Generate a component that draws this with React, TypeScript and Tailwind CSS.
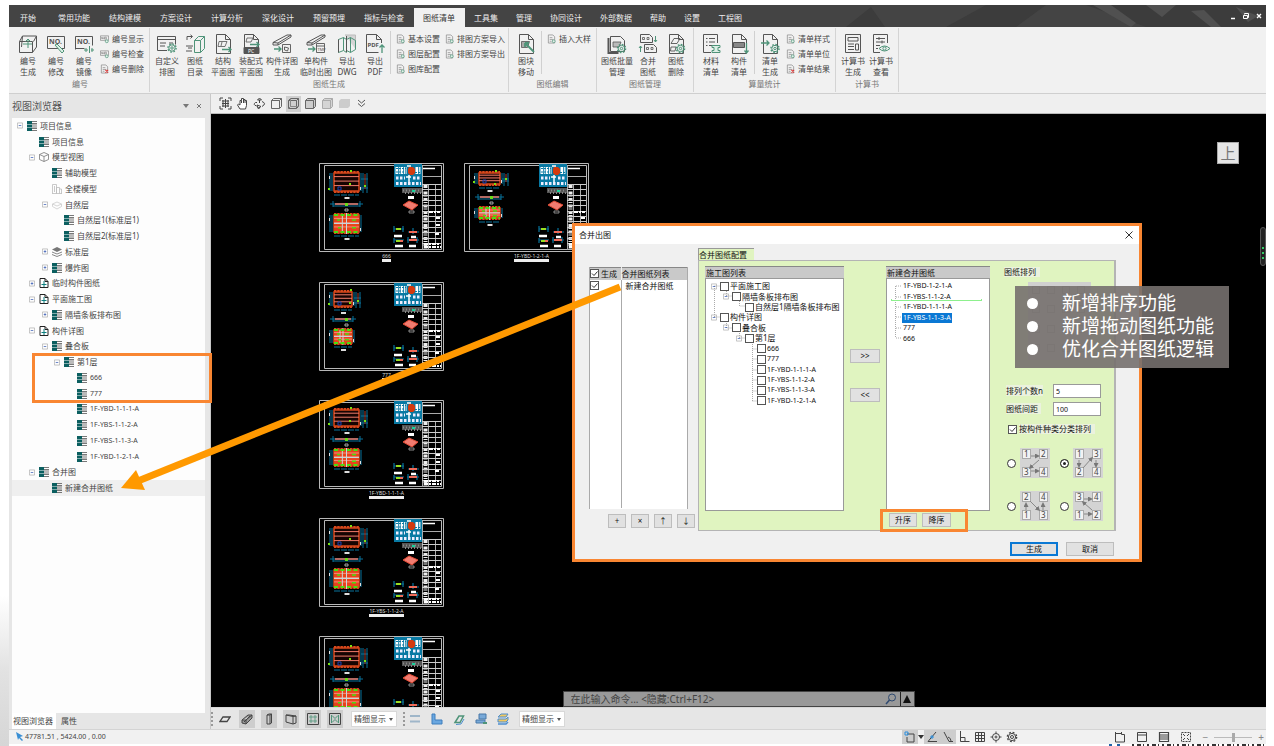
import type { ReactNode } from 'react';
import clsx from 'clsx';

const G = '#4f9479';
const D = '#555';

const TABS = ['开始', '常用功能', '结构建模', '方案设计', '计算分析', '深化设计', '预留预埋', '指标与检查', '图纸清单', '工具集', '管理', '协同设计', '外部数据', '帮助', '设置', '工程图'];

const PAGE = <path d="M3.500 .5h9l5 5v14h-14zM12.500 .5v5h5" />;

const gear = (x: number, y: number) => (
  <g stroke={G}>
    <circle cx={x} cy={y} r="3.200" />
    <circle cx={x} cy={y} r="1.200" />
    <circle cx={x} cy={y} r="4.100" strokeDasharray="1.600 1.600" strokeWidth="1.400" />
  </g>
);

const ICONS: Record<string, ReactNode> = {
  generate: <><path d="M1.500 7.500h13v11h-13zM1.500 7.500l3-5.500h14l-3 5.500M18.500 2v11l-4 5.500M4.500 2l-1 11" /><path d="M5 10h9M10 14V5M7.500 7.500L10 5l2.500 2.500" stroke={G} /></>,
  modify: <><path d="M1.500 2.500h17v12h-17z" /><text x="3" y="10" fontSize="7" fontWeight="bold" fill={D} stroke="none">NO.</text><path d="M9 11l2-1 7 7-2 2z" stroke={G} fill="#dcefe6" /></>,
  mirror: <><path d="M1.500 15.500v-13h17v9M1.500 14.500h9" /><text x="3" y="10" fontSize="7" fontWeight="bold" fill={D} stroke="none">NO.</text><path d="M15.500 12v7M10 16h4M17 16h3M12 14v4M18 14v4" stroke={G} /></>,
  custom: <><path d="M10 16.500H.5v-14h18v8M.5 5.500h18M3 9h6M3 12h5M12 9h4" />{gear(15, 14)}</>,
  catalog: <><path d="M9.500 6.500l4-4h6v12l-4 4h-6zM9.500 6.500h6v12M15.500 6.500l4-4" stroke={G} /><path d="M2 6V2.500h5M5.500 .8L7.500 2.500 5.500 4.500M1 12h7M3 14h4M1 17h6" /></>,
  plan: <>{PAGE}<path d="M6 7.500h8l-2 5H5zM9 8l-1 4" strokeWidth=".8" /><path d="M9 15.500h9M15.500 13l2.500 2.500-2.500 2.500" stroke={G} strokeWidth="1.300" /></>,
  prefab: <>{PAGE}<path d="M6 4h6l-2 4H5z" strokeWidth=".8" /><path d="M9 10.500h9M15.500 8l2.500 2.500L15.500 13" stroke={G} strokeWidth="1.300" /><path d="M3 13.500h15v6H3z" fill={D} /><text x="7" y="18.500" fontSize="5" fill="#fff" stroke="none">PC</text></>,
  detail: <><path d="M1 8.500L15 1h4L6 9zM1 8.500V11h5L19 3V1M6 9v2" /><path d="M2 15h7M6.500 12.500L9 15l-2.500 2.500" stroke={G} strokeWidth="1.300" /><path d="M10.500 10.500h8v8h-8zM12.500 13l4 1-1 3-3-1z" strokeWidth=".9" /></>,
  single: <><path d="M1 8.500L15 1h4L6 9zM1 8.500V11h5L19 3V1M6 9v2" /><path d="M2 15h7M6.500 12.500L9 15l-2.500 2.500" stroke={G} strokeWidth="1.300" /><path d="M10.500 9.500h8v9h-8zM10.500 12h8" strokeWidth=".9" /><text x="11.500" y="17" fontSize="4" fill={D} stroke="none">TMP</text></>,
  dwg: <><path d="M8 1h10.500v14" fill="#d5d5d5" stroke="#bbb" /><path d="M1.500 5.500l5-2v13l-5 2zM6.500 3.500l3 2v13l-3-2M9.500 5.500l4-2 5 3v9l-5 3-4-2M13.500 3.500v15" stroke={G} /><path d="M1.500 5.500v13M9.500 2v16" /></>,
  pdf: <><path d="M16.500 9V5.500l-5-5h-10v18h12M11.500 .5v5h5" /><text x="2.500" y="13" fontSize="6" fontWeight="bold" fill={D} stroke="none">PDF</text><path d="M17 19v-8M14.500 13.500L17 11l2.500 2.500" stroke={G} strokeWidth="1.300" /></>,
  block: <>{PAGE}<path d="M5.500 7.500h8l-2 6h-6z" fill="#aaa" strokeWidth=".8" /><path d="M9 9l9 9M9 9v4M9 9h4" stroke={G} strokeWidth="1.800" /></>,
  batch: <><path d="M3.500 2.500h10l4 4v11h-14z" /><path d="M1.500 4v15h10" strokeWidth="2" /><path d="M6 8h8l-2 5H6z" fill="#bbb" strokeWidth=".8" />{gear(14.500, 14.500)}</>,
  merge: <><path d="M2.500 .5h9l3 3v5h-12zM6.500 10.500h9l3 3v5h-12z" /><path d="M4.500 3.500h2v2h-2zM9 3.500h2v2H9zM8.500 13.500h2v2h-2zM13 13.500h2v2h-2z" strokeWidth=".8" /><path d="M17.500 2v6M16 6l1.500 2L19 6M2.500 18v-6M1 14l1.500-2L4 14" stroke={G} /></>,
  remove: <>{PAGE}<path d="M8 4.500h6l-3 5H5zM5 13h5l-1 4H4.500z" strokeWidth=".9" />{gear(14.500, 14.500)}</>,
  material: <><path d="M16.500 9V.5h-14v18H10M5 4.500h1.500M8 4.500h6M5 8h1.500M8 8h6M5 11.500h1.500M8 11.500h3" /><path d="M11 11.500h8v2h-2v3h2v2h-8v-2h2v-3h-2z" stroke={G} fill="#dcefe6" /></>,
  component: <>{PAGE}<path d="M4.500 8.500h11v5h-11z" fill="#888" /><path d="M17.500 9v10M15.500 16.500l2 2.500 2-2.500" stroke={G} strokeWidth="1.300" /></>,
  listgen: <>{PAGE}<path d="M1 9h8M6.500 6.500L9 9l-2.500 2.500" stroke={G} strokeWidth="1.300" />{gear(15, 14.500)}</>,
  calc: <path d="M2.500 .5h15v18h-15zM5 3.500h10v3.500H5zM5 10h6M5 12.500h6M5 15.500h6M12.500 10h3v6h-3z" />,
  view: <><path d="M16.500 9V.5h-14v18H9M5 4.500h9M8 3v3M5 8h9M11 6.500v3M5 11.500h4M5 14.500h2" /><path d="M8 14.500q5.500-5 11 0q-5.500 5-11 0z" stroke={G} /><circle cx="13.500" cy="14.500" r="1.600" stroke={G} /></>,
};

function Icon({ name }: { name: string }) {
  return <svg viewBox="0 0 20 20" className="h-5 w-5" fill="none" stroke={D}>{ICONS[name]}</svg>;
}

function SmallIcon({ kind }: { kind: string }) {
  return (
    <svg viewBox="0 0 10 10" className="h-[10px] w-[9px] shrink-0" fill="none" stroke="#888" strokeWidth=".8">
      {kind === 'no' ? <path d="M.5 1.500h9v5h-9zM2 5V3l1.500 2V3M5 3h2v2H5z" /> : <path d="M1.500 .5h5l2 2v7h-7zM3 3.500h3M3 5.500h4M3 7.500h2" />}
      {kind === 'x' ? <path d="M6 6l3 3M9 6L6 9" stroke="#d33" strokeWidth="1.200" /> : <circle cx="7.500" cy="7.500" r="1.600" stroke={G} fill="#e4f1ea" />}
    </svg>
  );
}

type Big = [string, string, string, boolean?];

function BigButton({ item }: { item: Big }) {
  const [icon, a, b, wide] = item;
  return (
    <button className={clsx('flex flex-col items-center pt-[6px] leading-[11px] whitespace-nowrap', wide ? 'w-[34px]' : 'w-7')}>
      <Icon name={icon} />
      <span className="mt-px">{a}</span>
      <span>{b}</span>
    </button>
  );
}

function SmallColumn({ items }: { items: [string, string][] }) {
  return (
    <div className="flex flex-col pt-[3px]">
      {items.map(([kind, text]) => (
        <button key={text} className="flex h-[15px] items-center gap-[3px] whitespace-nowrap"><SmallIcon kind={kind} />{text}</button>
      ))}
    </div>
  );
}

function Group({ title, children }: { title: string; children: ReactNode }) {
  return (
    <section className="my-px flex flex-col border-r border-[#d4d4d4] px-[3px]">
      <div className="flex h-[49px]">{children}</div>
      <h2 className="text-center leading-[14px] text-[#777]">{title}</h2>
    </section>
  );
}

const Sep = () => <div className="mx-px mt-[3px] mb-[3px] w-px bg-[#d0d0d0]" />;

function Ribbon() {
  return (
    <div className="flex h-[67px] border-b border-[#cfcfcf] bg-[#f1f1f1] pl-[2px] text-[8px] text-[#444]">
      <Group title="编号">
        <BigButton item={['generate', '编号', '生成']} />
        <BigButton item={['modify', '编号', '修改']} />
        <BigButton item={['mirror', '编号', '镜像']} />
        <div className="px-[2px]"><SmallColumn items={[['no', '编号显示'], ['no', '编号检查'], ['x', '编号删除']]} /></div>
      </Group>
      <Group title="图纸生成">
        <BigButton item={['custom', '自定义', '排图']} />
        <BigButton item={['catalog', '图纸', '目录']} />
        <BigButton item={['plan', '结构', '平面图']} />
        <BigButton item={['prefab', '装配式', '平面图']} />
        <BigButton item={['detail', '构件详图', '生成', true]} />
        <BigButton item={['single', '单构件', '临时出图', true]} />
        <BigButton item={['dwg', '导出', 'DWG']} />
        <BigButton item={['pdf', '导出', 'PDF']} />
        <Sep />
        <div className="flex gap-[5px] pl-1">
          <SmallColumn items={[['doc', '基本设置'], ['doc', '图层配置'], ['doc', '图库配置']]} />
          <SmallColumn items={[['doc', '排图方案导入'], ['doc', '排图方案导出']]} />
        </div>
      </Group>
      <Group title="图纸编辑">
        <BigButton item={['block', '图块', '移动']} />
        <Sep />
        <div className="pr-[2px] pl-1"><SmallColumn items={[['doc', '插入大样']]} /></div>
      </Group>
      <Group title="图纸管理">
        <BigButton item={['batch', '图纸批量', '管理', true]} />
        <BigButton item={['merge', '合并', '图纸']} />
        <BigButton item={['remove', '图纸', '删除']} />
      </Group>
      <Group title="算量统计">
        <BigButton item={['material', '材料', '清单']} />
        <BigButton item={['component', '构件', '清单']} />
        <Sep />
        <BigButton item={['listgen', '清单', '生成']} />
        <div className="px-[2px]"><SmallColumn items={[['doc', '清单样式'], ['doc', '清单单位'], ['x', '清单结果']]} /></div>
      </Group>
      <Group title="计算书">
        <BigButton item={['calc', '计算书', '生成']} />
        <BigButton item={['view', '计算书', '查看']} />
      </Group>
    </div>
  );
}

function TitleBar() {
  return (
    <header className="relative flex h-[22px] items-end bg-[#444] pl-[2px] text-[8px] text-[#eee]">
      <svg className="absolute inset-y-0 right-0 h-full w-[420px]" viewBox="0 0 420 22" preserveAspectRatio="none">
        <path d="M0 22L25 2l14 20zM100 22L140 0h60l-30 22zM240 0h180v22H300z" fill="#3c3c3c" />
        <path d="M265 0l25 18-5 4-38-22zM300 0h30l-14 12zM345 6l20 16h10L358 5zM390 2l12 15 10-6z" fill="#505050" />
      </svg>
      <nav className="relative flex h-[19px]">
        {TABS.map((t, i) => (
          <button key={t} className={clsx('pl-[9px] leading-[18px] whitespace-nowrap', i === 0 ? 'pr-[13px]' : i > 8 ? 'pr-[9px]' : 'pr-[10px]', t === '图纸清单' && 'bg-[#f1f1f1] text-[#333]')}>{t}</button>
        ))}
      </nav>
      <div className="relative ml-auto flex h-full items-center gap-[6px] pr-1">
        <button aria-label="minimize"><svg width="6" height="8" stroke="#fff"><path d="M1 6.500h4" strokeWidth="1.500" /></svg></button>
        <button aria-label="restore"><svg width="8" height="8" fill="none" stroke="#fff"><path d="M2.500 2.500v-1h4v4h-1M1.500 3.500h4v3h-4z" /></svg></button>
        <button aria-label="close"><svg width="6" height="8" stroke="#fff" strokeWidth="1.400"><path d="M1 2l4 4M5 2L1 6" /></svg></button>
      </div>
    </header>
  );
}

// [level, icon, label, expander]
const TREE: [number, string, string, string?][] = [
  [0, 'list', '项目信息', '-'],
  [1, 'list', '项目信息'],
  [1, 'cube', '模型视图', '-'],
  [2, 'list', '辅助模型'],
  [2, 'building', '全楼模型'],
  [2, 'ghost', '自然层', '-'],
  [3, 'list', '自然层1(标准层1)'],
  [3, 'list', '自然层2(标准层1)'],
  [2, 'layers', '标准层', '+'],
  [2, 'list', '爆炸图', '+'],
  [1, 'page', '临时构件图纸', '+'],
  [1, 'page', '平面施工图', '-'],
  [2, 'list', '隔墙条板排布图', '+'],
  [1, 'page', '构件详图', '-'],
  [2, 'list', '叠合板', '-'],
  [3, 'list', '第1层', '-'],
  [4, 'list', '666'],
  [4, 'list', '777'],
  [4, 'list', '1F-YBD-1-1-1-A'],
  [4, 'list', '1F-YBS-1-1-2-A'],
  [4, 'list', '1F-YBS-1-1-3-A'],
  [4, 'list', '1F-YBD-1-2-1-A'],
  [1, 'list', '合并图', '-'],
  [2, 'list', '新建合并图纸'],
];

const INDENT = ['pl-[5px]', 'pl-[17px]', 'pl-[30px]', 'pl-[42px]', 'pl-[55px]'];

const TREE_ICONS: Record<string, ReactNode> = {
  list: <><path d="M0 0h5v3H0zM0 3.500h5v3H0zM0 7h5v3H0z" fill="#0b5f60" /><path d="M5 .5h5M5 2.500h5M5 4h5M5 6h5M5 7.500h5M5 9.500h5" stroke="#555" strokeWidth=".8" /></>,
  cube: <path d="M5 .5l4.500 2v5L5 9.500.5 7.500v-5zM.5 2.500L5 4.500l4.500-2M5 4.500v5" fill="none" stroke="#777" strokeWidth=".8" />,
  building: <path d="M.5 9.500v-9h4v9M4.500 9.500v-6h3v6M7.500 5h2v4.500M0 9.500h10M2.500 2v6" fill="none" stroke="#bbb" strokeWidth=".8" />,
  ghost: <path d="M.5 4L5 2l4.500 2v2.500L5 9 .5 6.500zM.5 4L5 6l4.500-2" fill="none" stroke="#ccc" strokeWidth=".8" />,
  layers: <><path d="M5 0l5 2.500L5 5 0 2.500z" fill="#777" /><path d="M0 5l5 2 5-2M0 7.500l5 2 5-2" fill="none" stroke="#888" /></>,
  page: <><path d="M1 .5h5l3 3v6H1zM6 .5v3h3" fill="#fff" stroke="#222" /><path d="M5 3v6M2.500 6.500h5" stroke="#0b7f80" /></>,
};

function Expander({ sign }: { sign?: string }) {
  return (
    <svg viewBox="0 0 7 7" className={clsx('h-[7px] w-[6px] shrink-0', !sign && 'invisible')} fill="none" strokeWidth=".8">
      <path d="M.5 .5h6v6h-6z" stroke="#aaa" />
      <path d={sign === '+' ? 'M2 3.500h3M3.500 2v3' : 'M2 3.500h3'} stroke="#2a50b0" />
    </svg>
  );
}

function Browser() {
  return (
    <aside className="flex w-[202px] shrink-0 flex-col border-r border-[#c8c8c8] bg-[#e6e6e6] pl-[3px]">
      <div className="flex h-6 items-center text-[#555]">
        <h1 className="grow text-[10px]">视图浏览器</h1>
        <button aria-label="menu" className="mr-[7px]"><svg width="6" height="4"><path d="M0 0h6L3 4z" fill="#777" /></svg></button>
        <button aria-label="close" className="mr-2"><svg width="6" height="6" stroke="#777"><path d="M1 1l4 4M5 1L1 5" /></svg></button>
      </div>
      <div className="mr-[5px] grow bg-[#fdfdfd]">
        <ul className="flex h-[378px] flex-col text-[8px] text-[#444]">
          {TREE.map(([lv, icon, text, sign], i) => (
            <li key={i} className={clsx('flex flex-1 items-center', INDENT[lv], i === 23 && 'bg-[#efefef]')}>
              <Expander sign={sign} />
              <svg viewBox="0 0 10 10" className="mr-[3px] ml-1 h-[10px] w-[10px] shrink-0">{TREE_ICONS[icon]}</svg>
              <span className={clsx('leading-3', lv === 4 && 'text-[7px]')}>{text}</span>
            </li>
          ))}
        </ul>
      </div>
      <div className="flex h-4 text-[8px] leading-[14px] text-[#444]">
        <button className="bg-white pr-[3px] pl-px">视图浏览器</button>
        <button className="px-[5px]">属性</button>
      </div>
    </aside>
  );
}

function Box3({ d = 'none', stroke = '#666' }: { d?: string; stroke?: string }) {
  return <path d="M1.500 3.500l2-2h8v8l-2 2h-8zM1.500 3.500h8v8M9.500 3.500l2-2" fill={d} stroke={stroke} />;
}

function ViewBar() {
  const items: [string, ReactNode][] = [
    ['fit', <><path d="M1 4V1h3M9 1h3v3M12 9v3H9M4 12H1V9" fill="none" stroke="#444" /><path d="M3 4h7M3 6.500h7M3 9h7M4 3v7M6.500 2v9M9 3v7" stroke="#444" /></>],
    ['pan', <path d="M4 12L1.500 8l1-1L4 8V3.500h1.500V1.500h2v1h1.500v1h1.500v5L9.500 12zM5.500 3.500V6M7.500 2v4M9 3v3" fill="#fff" stroke="#444" />],
    ['orbit', <path d="M6.500 1l2 2h-4zM4 5.500h-1.500q-3 2 1 3.500M9 4.500q5 2 0 5M6.500 3v3M4 8l4 1.500-3 2zM6 10v2" fill="none" stroke="#444" />],
    ['wire', <Box3 />],
    ['hidden', <><Box3 /><path d="M3.500 1.500v8h8M3.500 9.500l-2 2" fill="none" stroke="#888" /></>],
    ['shade', <Box3 d="#ccc" />],
    ['solid', <Box3 d="#d4d4d4" stroke="#aaa" />],
    ['flat', <path d="M1 4l2-2h9v7l-2 2H1z" fill="#ccc" />],
    ['more', <path d="M3 3l3.500 3L10 3M3 6.500l3.500 3 3.500-3" fill="none" stroke="#555" />],
  ];
  return (
    <div className="flex h-5 items-center gap-[2px] border-b border-[#bbb] bg-[#efefef] pl-[7px]">
      {items.map(([name, art]) => (
        <button key={name} aria-label={name} className={clsx('flex h-4 w-[15px] items-center justify-center', name === 'hidden' && 'bg-[#cfcfcf]')}>
          <svg viewBox="0 0 13 13" className="h-[13px] w-[13px]">{art}</svg>
        </button>
      ))}
    </div>
  );
}

function Slab({ x, y, w, h, green }: { x: number; y: number; w: number; h: number; green?: boolean }) {
  return (
    <g>
      <path d={`M${x} ${y - 1}h${w}M${x} ${y + h + 1}h${w}`} stroke="#d8481c" strokeWidth="2" strokeDasharray="2.500 .7" />
      <rect x={x} y={y} width={w} height={h} fill={green ? '#e8441c' : '#160402'} stroke="#d8481c" strokeWidth="1.500" />
      {[0.200, 0.450, 0.700].map((k) => (
        <path key={k} d={`M${x} ${y + h * k}h${w}`} stroke={green ? '#f58a78' : '#f07c6c'} />
      ))}
      {green ? (
        <>
          <path d={`M${x + w / 2} ${y - 2}v${h + 4}M${x + w / 3} ${y}v${h}M${x} ${y + h / 2}h${w}`} stroke="#c9d4d8" />
          <path d={`M${x} ${y}h${w}M${x} ${y + h}h${w}`} stroke="#47e010" strokeWidth="2" strokeDasharray="4 2.500" />
          <path d={`M${x + 3} ${y + h * 0.300}h3M${x + w - 7} ${y + h * 0.300}h4M${x + 4} ${y + h * 0.750}h3M${x + w - 7} ${y + h * 0.750}h4`} stroke="#47e010" strokeWidth="1.500" />
        </>
      ) : (
        <path d={`M${x + 4} ${y + h - 4}h3v3h-3z`} fill="none" stroke="#1744b8" />
      )}
      <path d={`M${x - 4} ${y}v${h}M${x - 2} ${y}v${h}M${x + w + 2} ${y}v${h}`} stroke="#08739b" />
      <path d={`M${x} ${y + h + 4}h${w}`} stroke="#08739b" strokeDasharray="6 1" />
      <path d={`M${x - 5} ${y + 3}h1v3h-1zM${x + w + 1} ${y + h - 4}h1v3h-1zM${x + w / 2 - 2} ${y + h + 6}h5v2h-5z`} fill="#ddd" />
    </g>
  );
}

function Sheet({ w, h, top }: { w: number; h: number; top: number }) {
  const mid = top + h + 13;
  return (
    <svg viewBox="0 0 125 90" className="block h-[90px] w-[125px]">
      <path d="M.5 .5h124v88H.5zM5.500 2.500h117v84h-117z" fill="none" stroke="#b8b8b8" />
      <path d="M103.500 3v84M109.500 21v66M116.500 21v60M103 13.500h19" stroke="#aaa" fill="none" />
      <path d="M106.500 22v64" stroke="#eee" strokeWidth="4" strokeDasharray="3 1 1 1.500" />
      {[21, 26, 32, 37, 42, 48, 53, 58, 64, 69, 75, 80].map((y) => <path key={y} d={`M103 ${y + 0.500}h19`} stroke="#ccc" />)}
      <path d="M117 55h4M117 62h5M110 49h11M116 71h5M105 81h16M105 84h17" stroke="#fff" strokeWidth="2" strokeDasharray="4 1 2 1" />
      <path d="M104 5.500h12" stroke="#fff" strokeWidth="1.500" />
      <rect x="75" y="1" width="28" height="23" fill="#0879a3" />
      <path d="M76.500 7.500h11M96.500 7.500h5.500" stroke="#fff" strokeWidth="7" strokeDasharray="2.500 .8 1 .8" />
      <path d="M77 5.500h10M96 9.500h6M77 9h8" stroke="#0879a3" strokeDasharray="2 1" />
      <path d="M77 15h9M94 15h8M77 20.500h25" stroke="#eef" strokeWidth="3" strokeDasharray="2.500 1.500" />
      <path d="M88 3h4M90 12v7M87 14h5" stroke="#fff" strokeWidth="1.500" />
      <path d="M90 4h4l2 2v4l-2 2h-3l-2-2V6z" fill="#d33a0e" />
      <rect x="83" y="25" width="20" height="5" fill="#555" />
      <path d="M84 27.500h18M86 30h16" stroke="#888" strokeWidth="2" strokeDasharray="1 2" />
      <path d="M93 27h3v2h-3z" fill="#18d29a" />
      <path d="M89 33h6v3h-6z" fill="#fff" />
      <path d="M84 42l6-4 9 4-6 5z" fill="#f27c70" stroke="#e04a34" />
      <path d="M90 48h5v2h-5z" fill="none" stroke="#aaa" strokeWidth=".8" />
      <Slab x={15} y={top} w={w} h={h} />
      <path d={`M${w + 19} ${top}v${h + 2}M${w + 23} ${top}v${h + 2}M${w + 17} ${top + 6}h7M${w + 17} ${top + h - 3}h7`} stroke="#08739b" fill="none" />
      <path d={`M${w + 21} ${top + 1}v${h - 3}`} stroke="#b03a26" />
      <path d={`M31 ${top - 3}h2v2h-2zM30 ${top + 10}h2v2h-2zM9 ${top + h - 3}h2v2H9zM${w + 20} ${top + h - 6}h2v2h-2z`} fill="#7be010" />
      <path d={`M11 ${mid}h${w + 8}M14 ${mid - 3}v6M${w + 16} ${mid - 3}v6M14 ${mid + 2}h${w + 2}`} stroke="#08739b" />
      <path d={`M16 ${mid}h${w - 2}`} stroke="#ef7b6b" strokeWidth="1.500" />
      <path d={`M26 ${mid - 1}h3v3h-3z`} fill="#6adb18" />
      <path d={`M26 ${mid + 5}h3v2h-3z`} fill="none" stroke="#ccc" strokeWidth=".8" />
      <Slab x={15} y={mid + 11} w={w} h={h - 1} green />
      <g strokeWidth="1.200" fill="none">
        <path d="M75 63v6M84 63v6M75 66h10M89 69h11M94 65v6M75 75v5M75 77h10M88 77h12M89 74v6M98 74v6" stroke="#08739b" />
        <path d="M77 66h5M77 78h4" stroke="#9adf20" strokeWidth="2" />
        <path d="M90 69h8M81 78h3M90 77h8" stroke="#f06a58" strokeWidth="2" />
        <path d="M75 73h8M76 83h8M90 83h7M92 74h5" stroke="#fff" strokeWidth="2.500" />
      </g>
    </svg>
  );
}

const SHEETS = [
  { label: '666', pos: 'left-[108px] top-[49px]', w: 25, h: 18, top: 10 },
  { label: '1F-YBD-1-2-1-A', pos: 'left-[253px] top-[49px]', w: 21, h: 11, top: 10 },
  { label: '777', pos: 'left-[108px] top-[168px]', w: 18, h: 14, top: 10 },
  { label: '1F-YBD-1-1-1-A', pos: 'left-[108px] top-[286px]', w: 25, h: 16, top: 10 },
  { label: '1F-YBS-1-1-2-A', pos: 'left-[108px] top-[404px]', w: 25, h: 18, top: 10 },
  { label: '1F-YBS-1-1-3-A', pos: 'left-[108px] top-[522px]', w: 25, h: 18, top: 12 },
];

function Drawing() {
  return (
    <main className="relative flex grow items-end justify-center overflow-hidden bg-black">
      {SHEETS.map((s) => (
        <figure key={s.label} className={clsx('absolute flex flex-col items-center', s.pos)}>
          <Sheet w={s.w} h={s.h} top={s.top} />
          <figcaption className="ml-[10px] border-b-3 border-[#eee] text-[5px] leading-[6px] text-[#ddd]">{s.label}</figcaption>
        </figure>
      ))}
      <button className="absolute top-7 right-[27px] h-[22px] w-[22px] border border-[#aaa] bg-[#e6e6e6] text-[15px] leading-[20px] text-[#777]">上</button>
      <div className="absolute top-[113px] right-0 h-[39px] w-[6px] rounded-sm border border-[#555] bg-[#222]">
        <div className="mx-px mt-[19px] h-[2px] bg-[#3c6] shadow-[0_5px_#3c6,0_10px_#3c6]" />
      </div>
      <div className="relative flex h-4 w-[352px] border border-[#444] bg-[#999]">
        <input aria-label="command" placeholder="在此输入命令... <隐藏:Ctrl+F12>" className="w-full min-w-0 grow pl-[7px] text-[10px] leading-3 outline-none placeholder:text-[#444]" />
        <svg className="mr-[3px] h-[14px] w-3 shrink-0" viewBox="0 0 12 14" fill="none" stroke="#2f4a70"><circle cx="7" cy="5.500" r="3.500" /><path d="M4.500 8L1 12" strokeWidth="1.500" /></svg>
        <button aria-label="expand" className="flex w-[14px] shrink-0 items-center justify-center border-l border-[#222]"><svg width="8" height="8"><path d="M4 0l4 8H0z" fill="#111" /></svg></button>
      </div>
    </main>
  );
}

function LevelSelect() {
  return (
    <div className="relative ml-2 flex h-4 w-[46px]">
      <select aria-label="detail" className="block h-4 w-full appearance-none border border-[#d8d8d8] bg-white pl-[2px] text-[8px] leading-3 text-[#444]"><option>精细显示</option></select>
      <svg className="pointer-events-none absolute top-[7px] right-1" width="4" height="3"><path d="M0 0h4L2 3z" fill="#555" /></svg>
    </div>
  );
}

function Tool({ name, on, children }: { name: string; on?: boolean; children: ReactNode }) {
  return (
    <button aria-label={name} className={clsx('flex h-[18px] w-4 items-center justify-center', on && 'bg-[#cdcdcd]')}>
      <svg viewBox="0 0 12 12" className="h-3 w-3" fill="none" stroke="#444">{children}</svg>
    </button>
  );
}

const Grip = () => <div className="h-[14px] border-l-2 border-dotted border-[#999]" />;

function DisplayBar() {
  return (
    <div className="flex h-[22px] items-center border-t border-[#d8d8d8] bg-[#e6e6e6]">
      <Grip />
      <div className="flex gap-[6px] pl-1">
        <Tool name="slab"><path d="M4 4h7L8 8.500H1z" strokeWidth="1.300" /></Tool>
        <Tool name="beam" on><path d="M1 7l6-5 4 0v3L5 11l-4-1zM1 7l4 0 6-5M5 7v4M3 9l6-6" fill="#999" /></Tool>
        <Tool name="column" on><path d="M4 2l2-1h2.500v9L7 11H4zM4 2h3v9M7 2l1.500-1" /></Tool>
        <Tool name="wall" on><path d="M1 2h3l7 1v7l-3 1-7-2zM1 2l7 1.500v7.500M8 3.500l3-.5" /></Tool>
        <Tool name="grid" on><path d="M.5 .5h11v11H.5z" /><path d="M3 3h2v2H3zM7 3h2v2H7zM3 7h2v2H3zM7 7h2v2H7z" stroke={G} strokeWidth=".8" /></Tool>
        <Tool name="stair" on><path d="M.5 .5h11v11H.5z" /><path d="M3 2.500l3 3 3-3M3 9.500l3-3 3 3M2.500 2v8M9.500 2v8" stroke={G} /></Tool>
      </div>
      <LevelSelect />
      <div className="ml-[6px]"><Grip /></div>
      <div className="flex gap-[6px] pl-[2px]">
        <Tool name="measure"><path d="M1 3h10M1 8.500h10" stroke="#9fb6c9" strokeWidth="2" /></Tool>
        <Tool name="corner"><path d="M1 1h3v6h7v4H1z" fill="#6aa7e0" stroke="#3f7fbd" /></Tool>
        <Tool name="attach"><path d="M2 9.500L6 3h4.500L7 9.500z" stroke={G} strokeWidth="1.500" /><path d="M3 11.500l5-.5 3-5" stroke="#4d8ed0" /></Tool>
        <Tool name="machine"><path d="M4 1h7v5H4zM1 7h9v3H1z" fill="#78a9d8" stroke="#4878a8" /><path d="M8 10h4" stroke={G} strokeWidth="2" /></Tool>
        <Tool name="stack"><path d="M4 1h7L9 4H1zM1 6h8l2-2v3L9 9H1z" fill="#f0c860" stroke="#4d8ed0" /><path d="M1 11h8l2-2" stroke="#4d8ed0" strokeWidth="1.500" /></Tool>
      </div>
      <LevelSelect />
    </div>
  );
}

function StatusBar() {
  return (
    <footer className="flex h-[15px] items-center border-t border-[#d4d4d4] bg-[#f1f1f1] text-[7px] text-[#444]">
      <svg className="ml-[7px]" width="8" height="10"><path d="M0 0l7 4-3 1 3 3-1 1-3-3-1 2z" fill="#3a8fd4" /></svg>
      <span className="ml-px">47781.51 , 5424.00 , 0.00</span>
      <div className="ml-auto flex h-full items-center overflow-hidden">
        <Tool name="snap" on><path d="M3 3h7v8H3V6" /><path d="M1 1h3v3H1z" stroke="#2b8fe0" /></Tool>
        <svg width="6" height="4"><path d="M0 0h6L3 4z" fill="#333" /></svg>
        <Tool name="polar" on><path d="M10 1L2 10.500h9" /><path d="M5 5h2v2H5z" stroke="#2b8fe0" /></Tool>
        <Tool name="angle" on><path d="M2 1l5 9.500h4M6 6q3 1 3 4" /></Tool>
        <Tool name="ortho"><path d="M2.500 0v10.500h9M3 6.500h4v4" /></Tool>
        <Tool name="mesh"><path d="M1.500 1.500h9v9h-9zM4.500 1.500v9M7.500 1.500v9M1.500 4.500h9M1.500 7.500h9" /></Tool>
        <Tool name="center"><circle cx="6" cy="6" r="3.500" /><circle cx="6" cy="6" r="1" /><path d="M6 .5v2M6 9.500v2M.5 6h2M9.500 6h2" /></Tool>
        <Tool name="options"><circle cx="6" cy="6" r="1.500" /><circle cx="6" cy="6" r="3.600" /><circle cx="6" cy="6" r="4.700" strokeDasharray="1.900 1.800" strokeWidth="1.300" /></Tool>
      </div>
      <div className="ml-[92px] flex items-center gap-[6px]">
        <Tool name="new"><path d="M1.500 2.500h6M1.500 1v10h9V3.500h-3V1" /></Tool>
        <Tool name="window"><path d="M1.500 1.500h9v9h-9zM1.500 4h9" /></Tool>
        <Tool name="rows"><path d="M1.500 1.500h9v9h-9zM2 4h8M2 6h8M2 8h8" strokeWidth="1.200" /></Tool>
        <Tool name="full"><path d="M1.500 1.500h9v9h-9z" strokeDasharray="2 1" /><path d="M3 3l2 2M9 3L7 5M3 9l2-2M9 9L7 7" /></Tool>
      </div>
      <div className="mr-[2px] ml-[9px] flex items-center gap-[6px] text-[10px] text-[#888]">
        <button className="leading-3">−</button>
        <input type="range" aria-label="zoom" defaultValue={50} className="h-[9px] w-[38px] appearance-none bg-[linear-gradient(#bbb,#bbb)] bg-[length:100%_1px] bg-center bg-no-repeat [&::-webkit-slider-thumb]:h-[9px] [&::-webkit-slider-thumb]:w-[3px] [&::-webkit-slider-thumb]:appearance-none [&::-webkit-slider-thumb]:bg-[#aaa]" />
        <button className="leading-3">+</button>
      </div>
    </footer>
  );
}

function Check({ label, checked }: { label: string; checked?: boolean }) {
  return (
    <span className="relative flex shrink-0">
      <input type="checkbox" aria-label={label} defaultChecked={checked} className="peer h-[9px] w-[9px] appearance-none border border-[#555] bg-white" />
      <svg viewBox="0 0 9 9" className="pointer-events-none absolute inset-0 hidden h-[9px] w-[9px] peer-checked:block" fill="none" stroke="#333"><path d="M2 4.500l2 2 3.500-4" /></svg>
    </span>
  );
}

function Head({ children }: { children: ReactNode }) {
  return <h3 className="h-3 border-t border-[#888] bg-[#c9c9c9] pl-px leading-[11px]">{children}</h3>;
}

// [level, label, has children]
const SOURCE: [number, string, boolean?][] = [
  [0, '平面施工图', true],
  [1, '隔墙条板排布图', true],
  [2, '自然层1隔墙条板排布图'],
  [0, '构件详图', true],
  [1, '叠合板', true],
  [2, '第1层', true],
  [3, '666'],
  [3, '777'],
  [3, '1F-YBD-1-1-1-A'],
  [3, '1F-YBS-1-1-2-A'],
  [3, '1F-YBS-1-1-3-A'],
  [3, '1F-YBD-1-2-1-A'],
];

const SOURCE_INDENT = ['pl-[5px]', 'pl-[17px]', 'pl-[30px]', 'pl-[42px]'];

const TARGET = ['1F-YBD-1-2-1-A', '1F-YBS-1-1-2-A', '1F-YBD-1-1-1-A', '1F-YBS-1-1-3-A', '777', '666'];

const BTN = 'border border-[#bdbdbd] bg-[#e1e1e1] text-center leading-3 h-[14px]';

// number at each corner (tl, tr, bl, br) and the path joining them
const ORDERS: [string, string, boolean][] = [
  ['1234', 'M11 8h6M19 12L11 19M11 23h6', false],
  ['1324', 'M6 12v5M10 20L18 11M23 12v5', true],
  ['2413', 'M6 19v-5M10 10L18 18M23 19v-5', false],
  ['3412', 'M11 8h6M19 19L11 12M11 23h6', false],
];

function OrderArt({ order, path }: { order: string; path: string }) {
  const xy = [[2, 2], [19, 2], [2, 20], [19, 20]];
  return (
    <svg viewBox="0 0 30 30" className="h-[30px] w-[30px] bg-[#d4d4d4]">
      <defs><marker id="tip" markerWidth="5" markerHeight="5" refX="2" refY="2.500" orient="auto"><path d="M0 0l5 2.500L0 5z" fill="#777" /></marker></defs>
      {xy.map(([x, y], i) => (
        <g key={i}>
          <rect x={x + 0.500} y={y - 0.500} width="8" height="9" fill="#f2f2f2" stroke="#aaa" />
          <text x={x + 2} y={y + 7} fontSize="8" fill="#444">{order[i]}</text>
        </g>
      ))}
      {path.split('M').filter(Boolean).map((p) => <path key={p} d={'M' + p} stroke="#888" fill="none" markerEnd="url(#tip)" />)}
    </svg>
  );
}

function MergeDialog() {
  return (
    <div role="dialog" className="absolute top-[223px] left-[572px] w-[570px] border-3 border-[#f98632] bg-[#f0f0f0] pb-[3px] text-[8px] text-[#111]">
      <div className="flex h-[18px] items-center justify-between bg-white pr-[6px] pl-1">
        <h2>合并出图</h2>
        <button aria-label="close"><svg width="8" height="8" stroke="#333"><path d="M.5 .5l7 7M7.500 .5l-7 7" /></svg></button>
      </div>
      <div className="flex pt-1 pr-[23px] pl-[14px]">
        <div className="mr-[3px] w-[106px] pt-[19px]">
          <div className="h-[242px] w-[99px] border-x border-[#aaa] bg-white">
            <table className="w-full border-collapse leading-[11px] whitespace-nowrap">
              <thead>
                <tr className="h-3 border-t border-[#888] bg-[#c9c9c9] text-left">
                  <th className="w-[31px] p-0 font-normal"><label className="flex items-center gap-[2px]"><Check label="生成" checked />生成</label></th>
                  <th className="border-l border-[#eee] p-0 font-normal">合并图纸列表</th>
                </tr>
              </thead>
              <tbody>
                <tr>
                  <td className="p-0 align-middle"><div className="flex h-3 items-center"><Check label="新建合并图纸" checked /></div></td>
                  <td className="border-l border-[#aaa] p-0 pl-1">新建合并图纸</td>
                </tr>
                <tr className="h-[216px]"><td /><td className="border-l border-[#aaa]" /></tr>
              </tbody>
            </table>
          </div>
          <div className="mt-[5px] ml-[19px] flex gap-[5px]">
            {['+', '×', '↑', '↓'].map((s) => <button key={s} className={clsx(BTN, 'w-[18px]')}>{s}</button>)}
          </div>
        </div>
        <div className="grow">
          <div className="h-3 w-14 border-t border-l border-[#999] bg-[#e0f4c0] leading-[11px] whitespace-nowrap">合并图纸配置</div>
          <div className="flex h-[271px] border border-r-2 border-[#b4b4b4] bg-[#e0f4c0] pt-[5px] pl-[6px]">
            <div className="w-[139px]">
              <Head>施工图列表</Head>
              <div className="relative h-[233px] border border-[#999] bg-white pt-[2px]">
                <svg className="absolute top-0 left-0 h-[130px] w-[60px]" fill="none" stroke="#aaa" strokeDasharray="1 1">
                  <path d="M8.500 7v31M8.500 7h7M20.500 12v5h7M33.500 22v5h7M8.500 38h7M20.500 42v7h7M33.500 52v7h7M46.500 63v60M46.500 70h6M46.500 80h6M46.500 91h6M46.500 101h6M46.500 112h6M46.500 122h6" />
                </svg>
                <ul className="relative flex h-[125px] flex-col">
                  {SOURCE.map(([lv, text, kids]) => (
                    <li key={text} className={clsx('flex flex-1 items-center whitespace-nowrap', SOURCE_INDENT[lv])}>
                      <Expander sign={kids ? '-' : undefined} />
                      <label className={clsx('ml-[3px] flex items-center gap-px leading-[10px]', lv === 3 && 'text-[7px]')}><Check label={text} />{text}</label>
                    </li>
                  ))}
                </ul>
              </div>
            </div>
            <div className="mx-[6px] flex w-[30px] flex-col gap-[25px] pt-[83px]">
              <button className={BTN}>&gt;&gt;</button>
              <button className={BTN}>&lt;&lt;</button>
            </div>
            <div className="w-[104px]">
              <Head>新建合并图纸</Head>
              <div className="relative h-[233px] border border-[#999] bg-white pt-[2px]">
                <svg className="absolute top-0 left-0 h-[70px] w-[20px]" fill="none" stroke="#aaa" strokeDasharray="1 1">
                  <path d="M8.500 7v52M9 7h6M9 18h6M9 28h6M9 38h6M9 49h6M9 59h6" />
                </svg>
                <ul className="relative flex h-[63px] flex-col items-start pl-[15px] text-[7px]">
                  {TARGET.map((t) => (
                    <li key={t} className={clsx('flex flex-1 items-center px-px', t === '1F-YBS-1-1-3-A' && 'bg-[#0a78d4] text-white')}>{t}</li>
                  ))}
                </ul>
                <div className="absolute top-[20px] left-1 h-[2px] w-[91px] border-x border-b border-[#8df08d]" />
              </div>
              <div className="mt-[2px] flex gap-[5px] pl-[3px]">
                <button className={clsx(BTN, 'w-7')}>升序</button>
                <button className={clsx(BTN, 'w-[29px]')}>降序</button>
              </div>
            </div>
            <div className="ml-[14px]">
              <h3 className="mt-px h-[10px] w-9 bg-[#ebf2de] leading-[10px]">图纸排列</h3>
              <div className="mt-[5px] ml-6 flex h-[78px] w-[63px] flex-wrap gap-[7px] bg-[#d0d0d0] p-1">
                {Array.from({ length: 16 }, (_, i) => <span key={i} className="h-2 w-2 border border-[#aaa]" />)}
              </div>
              <label className="mt-[24px] ml-[2px] flex h-[14px] items-center"><span className="w-[47px]"><span className="bg-[#ebf2de]">排列个数n</span></span>
                <input defaultValue="5" className="h-[14px] w-12 border border-[#999] bg-white pl-[2px] text-[7px]" /></label>
              <label className="mt-1 ml-[2px] flex h-[14px] items-center"><span className="w-[47px]"><span className="bg-[#ebf2de] pr-[3px]">图纸间距</span></span>
                <input defaultValue="100" className="h-[14px] w-12 border border-[#999] bg-white pl-[2px] text-[7px]" /></label>
              <label className="mt-2 ml-1 flex h-[10px] items-center gap-[2px] leading-[10px]"><Check label="按构件种类分类排列" checked /><span className="bg-[#ebf2de] pr-1">按构件种类分类排列</span></label>
              <div className="mt-[14px] ml-[3px] grid grid-cols-[44px_44px] gap-x-[9px] gap-y-[13px]">
                {ORDERS.map(([order, path, on]) => (
                  <label key={order} className="flex items-center gap-1">
                    <input type="radio" name="order" aria-label={order} defaultChecked={on} className="h-[9px] w-[9px] shrink-0 appearance-none rounded-full border border-[#333] bg-white checked:bg-[#222] checked:shadow-[inset_0_0_0_2px_white]" />
                    <OrderArt order={order} path={path} />
                  </label>
                ))}
              </div>
            </div>
          </div>
        </div>
      </div>
      <div className="mt-[11px] flex justify-end gap-2 pr-[25px]">
        <button className="h-[14px] w-12 border-2 border-[#0a78d4] bg-[#e1e1e1] leading-[10px]">生成</button>
        <button className={clsx(BTN, 'w-12')}>取消</button>
      </div>
      <div className="absolute top-[283px] left-[305px] h-[23px] w-[88px] border-3 border-[#f98632]" />
    </div>
  );
}

export default function App() {
  return (
    <div className="relative flex h-screen flex-col overflow-hidden bg-white pt-[5px] pr-2 pb-[2px] pl-[9px] font-['Noto_Sans','Noto_Sans_CJK_SC',sans-serif]">
      <div className="absolute bottom-0 left-0 h-[150px] w-[9px] bg-linear-to-b from-white via-[#e2e2e2] to-[#d6d6d6]" />
      <TitleBar />
      <Ribbon />
      <div className="flex min-h-0 grow">
        <Browser />
        <div className="flex min-w-0 grow flex-col">
          <ViewBar />
          <Drawing />
          <DisplayBar />
        </div>
      </div>
      <StatusBar />
      <svg className="absolute right-2 bottom-0" width="158" height="2">
        <path d="M1 1h3M9 1h3" stroke="#1e63a8" strokeWidth="2" />
        <path d="M24 1h132" stroke="#333" strokeWidth="2" strokeDasharray="2 3 4 2 1 3" />
      </svg>
      <MergeDialog />
      <div className="absolute top-[353px] left-[32px] h-[50px] w-[180px] border-3 border-[#f98632]" />
      <svg className="pointer-events-none absolute inset-0 h-full w-full">
        <path d="M620 287L138 481" stroke="#ff9900" strokeWidth="7" />
        <path d="M121 488l15-18 9 20z" fill="#ff9900" />
      </svg>
      <ul className="absolute top-[286px] left-[1015px] w-[214px] bg-[#75706e]/90 pt-[6px] pb-[7px] text-[19px] leading-[23px] text-white">
        {['新增排序功能', '新增拖动图纸功能', '优化合并图纸逻辑'].map((t) => (
          <li key={t} className="flex items-center whitespace-nowrap"><span className="mr-6 ml-3 h-[11px] w-[11px] rounded-full bg-white" />{t}</li>
        ))}
      </ul>
    </div>
  );
}
